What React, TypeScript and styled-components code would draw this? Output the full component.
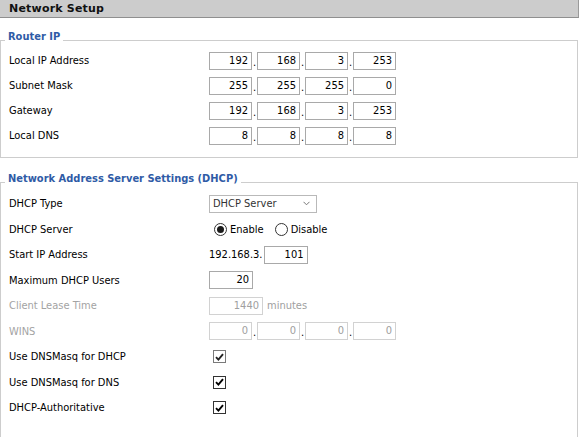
import React from 'react';
import styled, { createGlobalStyle } from 'styled-components';

const GlobalStyle = createGlobalStyle`
    body {
        margin: 0;
        background: #fff;
        font-family: 'DejaVu Sans Condensed', 'DejaVu Sans', sans-serif;
        font-stretch: condensed;
        font-size: 11px;
        color: #000;
    }
`;

const Page = styled.div`
    width: 579px;
`;

const Header = styled.div`
    height: 17px;
    line-height: 17px;
    background: #cccccc;
    border-bottom: 1px solid #8f8f8f;
    border-right: 1px solid #9a9a9a;
    padding-left: 9px;
    font-family: 'DejaVu Sans', sans-serif;
    font-stretch: normal;
    font-weight: bold;
    font-size: 11px;
    letter-spacing: 0.2px;
    color: #111;
`;

const Section = styled.fieldset<{ $gap: number; $bottom?: number }>`
    width: 578px;
    box-sizing: border-box;
    margin: ${(p) => p.$gap}px 0 0 0;
    padding: 0 4px ${(p) => p.$bottom ?? 0}px 4px;
    border: 1px solid #cdcdcd;
    min-width: 0;
`;

const Legend = styled.legend`
    padding: 1px 3px 7px 3px;
    line-height: 14px;
    font-weight: bold;
    font-size: 11px;
    color: #2f5ba6;
`;

const Rows = styled.div<{ $h: number; $shift: number }>`
    margin-top: ${(p) => p.$shift}px;
    display: grid;
    grid-auto-rows: ${(p) => p.$h}px;
`;

const Row = styled.div`
    display: grid;
    grid-template-columns: 200px auto;
    align-items: center;
    padding-left: 4px;
`;

const Label = styled.span<{ $off?: boolean }>`
    color: ${(p) => (p.$off ? '#a3a3a3' : '#000')};
`;

const Field = styled.div`
    display: flex;
    align-items: center;
`;

const Box = styled.div<{ $w?: number; $off?: boolean }>`
    width: ${(p) => p.$w ?? 43}px;
    height: 18px;
    box-sizing: border-box;
    border: 1px solid ${(p) => (p.$off ? '#d2d2d2' : '#a9a9a9')};
    padding-right: 3px;
    text-align: right;
    line-height: 16px;
    color: ${(p) => (p.$off ? '#a0a0a0' : '#000')};
    background: #fff;
`;

const Dot = styled.span`
    width: 5px;
    align-self: flex-end;
    padding-left: 1px;
    box-sizing: border-box;
    line-height: 14px;
`;

const Select = styled.div`
    width: 108px;
    height: 18px;
    box-sizing: border-box;
    border: 1px solid #b9b9b9;
    display: flex;
    align-items: center;
    justify-content: space-between;
    padding: 0 6px 0 3px;
    color: #333;
`;

const RadioGroup = styled.label`
    display: flex;
    align-items: center;
    gap: 3px;
    margin-right: 11px;
    &:first-child {
        margin-left: 5px;
    }
`;

const Radio = styled.span<{ $on?: boolean }>`
    width: 13px;
    height: 13px;
    box-sizing: border-box;
    border-radius: 50%;
    border: 1px solid #333;
    display: flex;
    align-items: center;
    justify-content: center;
    &::after {
        content: '';
        width: 7px;
        height: 7px;
        border-radius: 50%;
        background: ${(p) => (p.$on ? '#1a1a1a' : 'transparent')};
    }
`;

const Check = styled.span<{ $dim?: boolean }>`
    width: 13px;
    height: 13px;
    box-sizing: border-box;
    margin-left: 4px;
    border: 1px solid ${(p) => (p.$dim ? '#7a7a7a' : '#333')};
    display: flex;
    align-items: center;
    justify-content: center;
    color: ${(p) => (p.$dim ? '#222' : '#000')};
`;

const Unit = styled.span`
    margin-left: 4px;
    color: #a0a0a0;
`;

const Plain = styled.span`
    margin-right: 1px;
`;

const IpFields = ({ parts, off }: { parts: string[]; off?: boolean }) => (
    <Field>
        {parts.map((p, i) => (
            <React.Fragment key={i}>
                <Box $off={off}>{p}</Box>
                {i < parts.length - 1 && <Dot>.</Dot>}
            </React.Fragment>
        ))}
    </Field>
);

const Tick = () => (
    <svg width="9" height="8" viewBox="0 0 9 8">
        <path d="M1 4.2 L3.4 6.6 L8 1.2" fill="none" stroke="currentColor" strokeWidth="1.9" />
    </svg>
);

const routerRows = [
    { label: 'Local IP Address', ip: ['192', '168', '3', '253'] },
    { label: 'Subnet Mask', ip: ['255', '255', '255', '0'] },
    { label: 'Gateway', ip: ['192', '168', '3', '253'] },
    { label: 'Local DNS', ip: ['8', '8', '8', '8'] },
];

export default function App() {
    return (
        <Page>
            <GlobalStyle />
            <Header>Network Setup</Header>

            <Section $gap={11} $bottom={9}>
                <Legend>Router IP</Legend>
                <Rows $h={25} $shift={-3}>
                    {routerRows.map((r) => (
                        <Row key={r.label}>
                            <Label>{r.label}</Label>
                            <IpFields parts={r.ip} />
                        </Row>
                    ))}
                </Rows>
            </Section>

            <Section $gap={13} $bottom={20}>
                <Legend>Network Address Server Settings (DHCP)</Legend>
                <Rows $h={25.5} $shift={-2}>
                    <Row>
                        <Label>DHCP Type</Label>
                        <Field>
                            <Select>
                                <span>DHCP Server</span>
                                <svg width="7" height="5" viewBox="0 0 7 5">
                                    <path d="M0.5 0.8 L3.5 3.8 L6.5 0.8" fill="none" stroke="#777" strokeWidth="1" />
                                </svg>
                            </Select>
                        </Field>
                    </Row>
                    <Row>
                        <Label>DHCP Server</Label>
                        <Field>
                            <RadioGroup>
                                <Radio $on />
                                Enable
                            </RadioGroup>
                            <RadioGroup>
                                <Radio />
                                Disable
                            </RadioGroup>
                        </Field>
                    </Row>
                    <Row>
                        <Label>Start IP Address</Label>
                        <Field>
                            <Plain>192.168.3.</Plain>
                            <Box $w={44}>101</Box>
                        </Field>
                    </Row>
                    <Row>
                        <Label>Maximum DHCP Users</Label>
                        <Field>
                            <Box $w={44}>20</Box>
                        </Field>
                    </Row>
                    <Row>
                        <Label $off>Client Lease Time</Label>
                        <Field>
                            <Box $w={54} $off>
                                1440
                            </Box>
                            <Unit>minutes</Unit>
                        </Field>
                    </Row>
                    <Row>
                        <Label $off>WINS</Label>
                        <IpFields parts={['0', '0', '0', '0']} off />
                    </Row>
                    <Row>
                        <Label>Use DNSMasq for DHCP</Label>
                        <Field>
                            <Check $dim>
                                <Tick />
                            </Check>
                        </Field>
                    </Row>
                    <Row>
                        <Label>Use DNSMasq for DNS</Label>
                        <Field>
                            <Check>
                                <Tick />
                            </Check>
                        </Field>
                    </Row>
                    <Row>
                        <Label>DHCP-Authoritative</Label>
                        <Field>
                            <Check>
                                <Tick />
                            </Check>
                        </Field>
                    </Row>
                </Rows>
            </Section>
        </Page>
    );
}
